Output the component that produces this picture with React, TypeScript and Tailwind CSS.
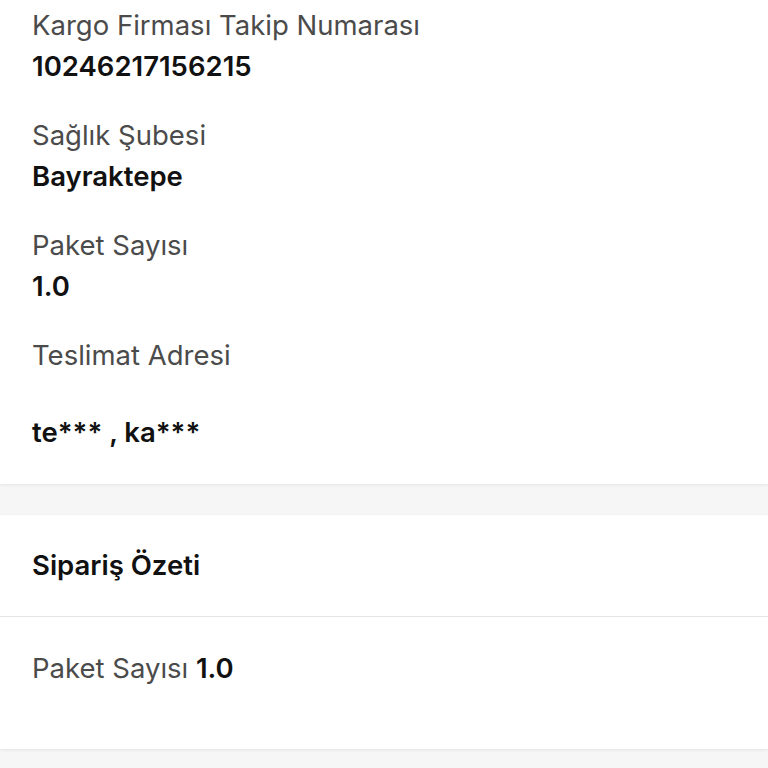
import React from "react";

function Field({ label, value, spacer }: { label: string; value: string; spacer?: boolean }) {
  return (
    <div className="flex flex-col">
      <div className="text-[27.5px] leading-[41px] text-[#4b4b4b]">{label}</div>
      {spacer && <div className="h-[36px]" />}
      <div className="text-[27.5px] leading-[41px] font-semibold text-[#111111]">{value}</div>
    </div>
  );
}

export default function App() {
  return (
    <div className="min-h-[768px] bg-[#f6f6f6]" style={{ fontFamily: "Inter, 'Noto Sans', sans-serif" }}>
      <div className="bg-white px-8 pt-[5px] pb-[31px] flex flex-col gap-[28px] shadow-[0_1px_3px_rgba(0,0,0,0.08)]">
        <Field label="Kargo Firması Takip Numarası" value="10246217156215" />
        <Field label="Sağlık Şubesi" value="Bayraktepe" />
        <Field label="Paket Sayısı" value="1.0" />
        <Field label="Teslimat Adresi" value="te*** , ka***" spacer />
      </div>
      <div className="h-[31px]" />
      <div className="bg-white shadow-[0_1px_3px_rgba(0,0,0,0.08)]">
        <div className="h-[102px] px-8 flex items-center border-b border-[#e6e6e6]">
          <span className="text-[27.5px] font-semibold text-[#111111]">Sipariş Özeti</span>
        </div>
        <div className="h-[132px] px-8 pt-[31px]">
          <span className="text-[27.5px] leading-[41px] text-[#4b4b4b]">Paket Sayısı </span>
          <span className="text-[27.5px] leading-[41px] font-semibold text-[#111111]">1.0</span>
        </div>
      </div>
    </div>
  );
}
